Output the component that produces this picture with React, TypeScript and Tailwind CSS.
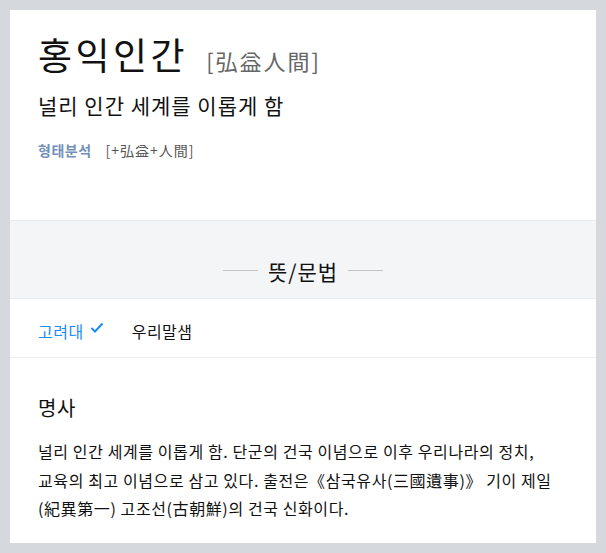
const font = "font-['Noto_Sans_CJK_KR','Noto_Sans',sans-serif]"

const App = () => {
  return (
    <div className={`min-h-screen bg-[#d5d8dc] p-[10px] ${font}`}>
      <div className="bg-white">
        {/* 표제어 */}
        <div className="px-[28px] pt-[21px] h-[210px]">
          <div className="flex items-baseline gap-[18px]">
            <h1 className="text-[37px] leading-[46px] tracking-[3.5px] text-[#111] font-normal">홍익인간</h1>
            <span className="text-[22px] text-[#666] tracking-[2px]">[弘益人間]</span>
          </div>
          <p className="mt-[14px] text-[21px] leading-[28px] tracking-[1px] text-[#111]">널리 인간 세계를 이롭게 함</p>
          <div className="mt-[21px] flex items-center gap-[14px] text-[14px] leading-[20px]">
            <span className="font-bold text-[#7290b8] tracking-[0.5px]">형태분석</span>
            <span className="text-[#555] tracking-[1px]">[+弘益+人間]</span>
          </div>
        </div>

        {/* 섹션 제목 */}
        <div className="h-[79px] bg-[#f4f5f7] border-t border-b border-[#e9eaec] flex items-center justify-center pt-[22px]">
          <div className="flex items-center gap-[10px]">
            <span className="w-[35px] h-px bg-[#c4c4c4]" />
            <span className="text-[21px] leading-[28px] tracking-[1px] text-[#111]">뜻/문법</span>
            <span className="w-[35px] h-px bg-[#c4c4c4]" />
          </div>
        </div>

        {/* 탭 */}
        <div className="h-[59px] border-b border-[#eceded] flex items-center px-[28px] gap-[28px] pt-[6px]">
          <div className="flex items-center gap-[6px] text-[16px] tracking-[0.5px] text-[#1b8bf5]">
            <span>고려대</span>
            <svg width="14" height="12" viewBox="0 0 14 12" className="-mt-[6px]">
              <polyline points="1.5,6 5,9.5 12.5,1.5" fill="none" stroke="#1b8bf5" strokeWidth="2" />
            </svg>
          </div>
          <span className="text-[16px] tracking-[0.5px] text-[#111]">우리말샘</span>
        </div>

        {/* 뜻풀이 */}
        <div className="px-[28px] pt-[36px] pb-[20px]">
          <h2 className="text-[20px] leading-[28px] tracking-[0.5px] text-[#111]">명사</h2>
          <p className="mt-[15px] text-[16px] leading-[28.5px] tracking-[0.6px] text-[#111] pr-[14px] break-keep">
            널리 인간 세계를 이롭게 함. 단군의 건국 이념으로 이후 우리나라의 정치, 교육의 최고 이념으로 삼고 있다. 출전은《삼국유사(三國遺事)》 기이 제일<wbr />(紀異第一) 고조선(古朝鮮)의 건국 신화이다.
          </p>
        </div>
      </div>
    </div>
  )
}

export default App
